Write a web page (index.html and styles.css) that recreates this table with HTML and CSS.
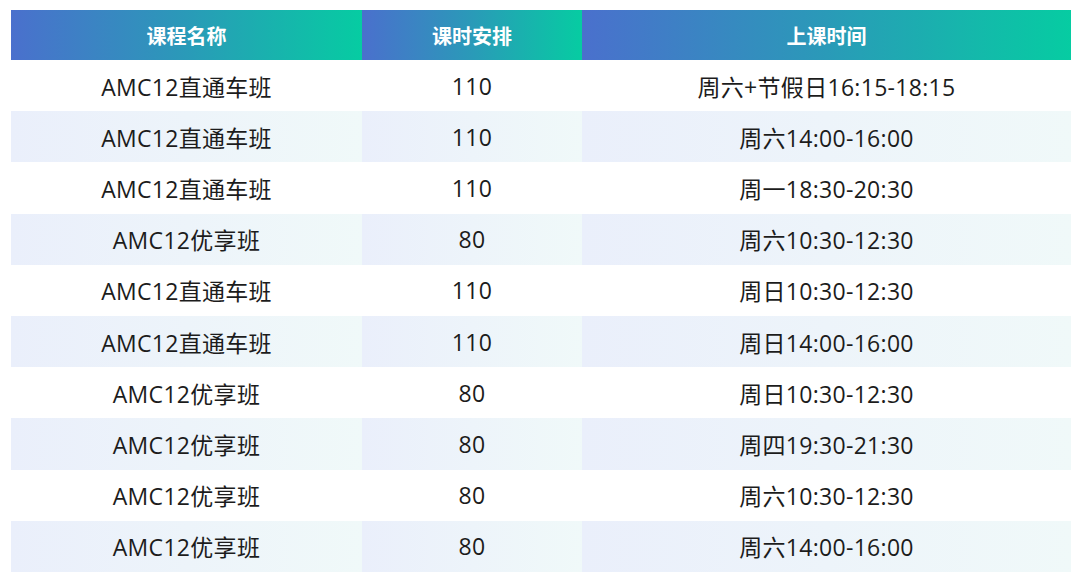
FILE: index.html
```html
<!DOCTYPE html>
<html lang="zh-CN">
<head>
<meta charset="utf-8">
<link rel="stylesheet" href="styles.css">
</head>
<body>
<div class="table">
  <div class="row head">
    <div class="cell">课程名称</div>
    <div class="cell">课时安排</div>
    <div class="cell">上课时间</div>
  </div>
  <div class="row">
    <div class="cell">AMC12直通车班</div><div class="cell">110</div><div class="cell">周六+节假日16:15-18:15</div>
  </div>
  <div class="row alt">
    <div class="cell">AMC12直通车班</div><div class="cell">110</div><div class="cell">周六14:00-16:00</div>
  </div>
  <div class="row">
    <div class="cell">AMC12直通车班</div><div class="cell">110</div><div class="cell">周一18:30-20:30</div>
  </div>
  <div class="row alt">
    <div class="cell">AMC12优享班</div><div class="cell">80</div><div class="cell">周六10:30-12:30</div>
  </div>
  <div class="row">
    <div class="cell">AMC12直通车班</div><div class="cell">110</div><div class="cell">周日10:30-12:30</div>
  </div>
  <div class="row alt">
    <div class="cell">AMC12直通车班</div><div class="cell">110</div><div class="cell">周日14:00-16:00</div>
  </div>
  <div class="row">
    <div class="cell">AMC12优享班</div><div class="cell">80</div><div class="cell">周日10:30-12:30</div>
  </div>
  <div class="row alt">
    <div class="cell">AMC12优享班</div><div class="cell">80</div><div class="cell">周四19:30-21:30</div>
  </div>
  <div class="row">
    <div class="cell">AMC12优享班</div><div class="cell">80</div><div class="cell">周六10:30-12:30</div>
  </div>
  <div class="row alt">
    <div class="cell">AMC12优享班</div><div class="cell">80</div><div class="cell">周六14:00-16:00</div>
  </div>
</div>
</body>
</html>
```

FILE: styles.css
```css
html, body {
  margin: 0;
  padding: 0;
  background: #ffffff;
}
body {
  font-family: "Open Sans", "Noto Sans CJK SC", sans-serif;
  color: #1c1c1c;
}
.table {
  margin: 10px 0 0 11px;
  width: 1060px;
  display: flex;
  flex-direction: column;
}
.row {
  display: grid;
  grid-template-columns: 351px 220px 489px;
  height: 51.2px;
}
.cell {
  display: flex;
  align-items: center;
  justify-content: center;
  font-size: 23px;
  letter-spacing: 0.3px;
}
.head {
  height: 50px;
}
.head .cell {
  background: linear-gradient(90deg, #4a70cd 0%, #2a9ab8 50%, #06cca2 100%);
  color: #ffffff;
  font-weight: 700;
  font-size: 20px;
  font-family: "Noto Sans CJK SC", sans-serif;
  letter-spacing: 0;
}
.alt .cell {
  background: linear-gradient(90deg, #eaeffb 0%, #f0f9f9 100%);
}
```
